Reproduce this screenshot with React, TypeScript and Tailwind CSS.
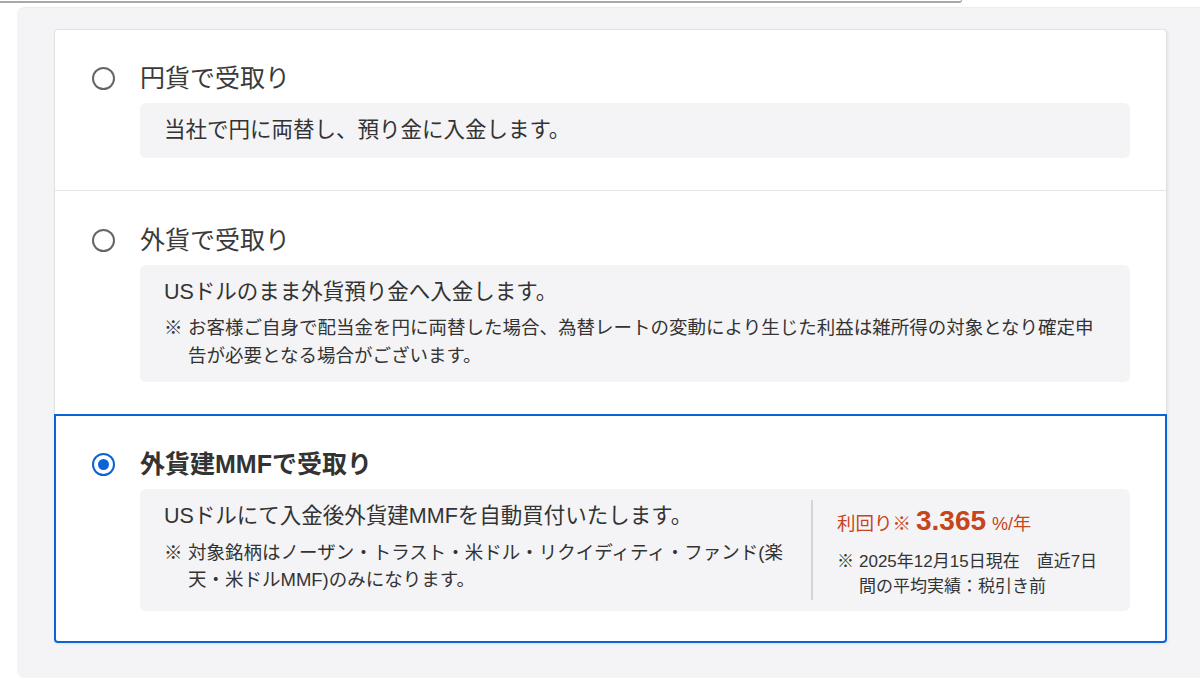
import { useState } from 'react';

interface Option {
  id: string;
  title: string;
  main: string;
  note?: string;
}

const options: Option[] = [
  {
    id: 'jpy',
    title: '円貨で受取り',
    main: '当社で円に両替し、預り金に入金します。',
  },
  {
    id: 'usd',
    title: '外貨で受取り',
    main: 'USドルのまま外貨預り金へ入金します。',
    note: 'お客様ご自身で配当金を円に両替した場合、為替レートの変動により生じた利益は雑所得の対象となり確定申告が必要となる場合がございます。',
  },
  {
    id: 'mmf',
    title: '外貨建MMFで受取り',
    main: 'USドルにて入金後外貨建MMFを自動買付いたします。',
    note: '対象銘柄はノーザン・トラスト・米ドル・リクイディティ・ファンド(楽天・米ドルMMF)のみになります。',
  },
];

const Radio = ({ checked }: { checked: boolean }) => (
  <span
    className={`flex h-[23px] w-[23px] shrink-0 items-center justify-center rounded-full border-[2.5px] ${
      checked ? 'border-[#0b63d6]' : 'border-[#666666]'
    }`}
  >
    {checked && <span className="h-[11px] w-[11px] rounded-full bg-[#0b63d6]" />}
  </span>
);

const Note = ({ text, mark = 'w-[24px]', className = '' }: { text: string; mark?: string; className?: string }) => (
  <div className={`flex ${className}`}>
    <span className={`${mark} shrink-0`}>※</span>
    <span>{text}</span>
  </div>
);

const App = () => {
  const [selected, setSelected] = useState('mmf');

  return (
    <div
      className="h-[692px] w-[1200px] overflow-hidden bg-white text-[#333333]"
      style={{ fontFamily: '"Liberation Sans", "Noto Sans CJK JP", sans-serif' }}
    >
      <div className="h-[3px] w-[962px] rounded-br-[6px] border-b-2 border-r border-[#a8a8a8]" />
      <div className="ml-[17px] mt-[4px] w-[1220px] rounded-l-[8px] border-t border-[#ececef] bg-[#f4f4f6] pb-[35px] pl-[37px] pr-[70px] pt-[21px]">
        <div className="w-[1113px] rounded-[4px] border border-[#e2e2e4] bg-white shadow-[1px_1px_3px_rgba(0,0,0,0.08)]">
          {options.map((opt, i) => {
            const isSel = selected === opt.id;
            const isMmf = opt.id === 'mmf';
            return (
              <div
                key={opt.id}
                onClick={() => setSelected(opt.id)}
                className={`cursor-pointer ${
                  isSel
                    ? '-mx-px -mb-px rounded-b-[4px] border-2 border-[#0b63d6] pb-[30px] pl-[35px] pr-[35px] pt-[31px]'
                    : `px-[36px] pb-[32px] ${i > 0 ? 'border-t border-[#e3e3e3] pt-[32px]' : 'pt-[31px]'}`
                }`}
              >
                <label className="flex h-[34px] cursor-pointer items-center">
                  <span className="ml-px">
                    <Radio checked={isSel} />
                  </span>
                  <span
                    className={`ml-[25px] text-[25px] leading-[34px] ${
                      isSel ? 'font-bold text-[#333333]' : 'text-[#3a3a3a]'
                    }`}
                  >
                    {opt.title}
                  </span>
                </label>
                <div className="ml-[49px] mt-[8px] flex rounded-[6px] bg-[#f4f4f6] px-[24px] py-[12px]">
                  <div className={`flex-1 ${isMmf ? 'pr-[16px]' : ''}`}>
                    <p className="text-[21.5px] leading-[31px]">{opt.main}</p>
                    {opt.note && (
                      <Note
                        text={opt.note}
                        className={`text-[18.5px] ${isMmf ? 'mt-[7px] leading-[27px]' : 'mt-[6px] leading-[28px]'}`}
                      />
                    )}
                  </div>
                  {isMmf && (
                    <>
                      <div className="my-[-1px] w-[2px] bg-[#d4d4d6]" />
                      <div className="w-[293px] shrink-0 pl-[24px]">
                        <p className="flex h-[40px] items-baseline pt-[1px] leading-[38px] text-[#c5451c]">
                          <span className="text-[18.5px]">利回り※</span>
                          <span className="ml-[5px] text-[28px] font-bold">3.365</span>
                          <span className="ml-[6px] text-[18px]">%/年</span>
                        </p>
                        <Note
                          text="2025年12月15日現在　直近7日間の平均実績：税引き前"
                          mark="w-[22px]"
                          className="mt-[8px] text-[17px] leading-[25px]"
                        />
                      </div>
                    </>
                  )}
                </div>
              </div>
            );
          })}
        </div>
      </div>
    </div>
  );
};

export default App;
